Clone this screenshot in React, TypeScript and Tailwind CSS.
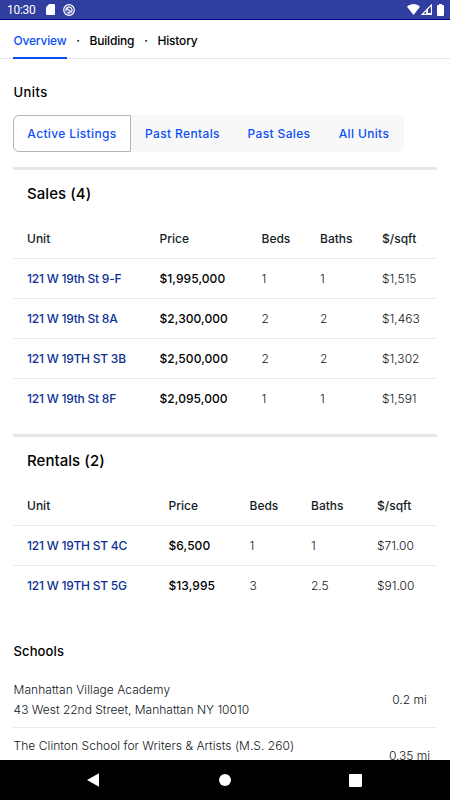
import { clsx } from "clsx";

const NAV = ["Overview", "Building", "History"];

type Listing = {
  unit: string;
  price: string;
  beds: string;
  baths: string;
  sqft: string;
};

const SALES: Listing[] = [
  { unit: "121 W 19th St 9-F", price: "$1,995,000", beds: "1", baths: "1", sqft: "$1,515" },
  { unit: "121 W 19th St 8A", price: "$2,300,000", beds: "2", baths: "2", sqft: "$1,463" },
  { unit: "121 W 19TH ST 3B", price: "$2,500,000", beds: "2", baths: "2", sqft: "$1,302" },
  { unit: "121 W 19th St 8F", price: "$2,095,000", beds: "1", baths: "1", sqft: "$1,591" },
];

const RENTALS: Listing[] = [
  { unit: "121 W 19TH ST 4C", price: "$6,500", beds: "1", baths: "1", sqft: "$71.00" },
  { unit: "121 W 19TH ST 5G", price: "$13,995", beds: "3", baths: "2.5", sqft: "$91.00" },
];

function StatusBar() {
  return (
    <div className="flex h-5 shrink-0 items-center border-b border-[#00007c] bg-[#303f9f] pr-[6px] pl-[7px] text-white">
      <span className="pt-px font-[Roboto] text-[12px] leading-none tracking-[-0.3px]">10:30</span>
      <svg className="ml-[11px] h-[11px] w-[9px]" viewBox="0 0 9 11" fill="currentColor">
        <path d="M3.2 0H8a1 1 0 0 1 1 1v9a1 1 0 0 1-1 1H1a1 1 0 0 1-1-1V3.2z" />
      </svg>
      <svg className="ml-2 size-3" viewBox="0 0 12 12" fill="none" stroke="currentColor">
        <circle cx="6" cy="6" r="5.3" strokeWidth="1.2" />
        <path d="M3.2 7.4A3 3 0 0 1 8.6 4.6a3 3 0 0 1 .1 2.8M3.6 4.2l5 4.2M4.2 8.4a3 3 0 0 0 3 .3" strokeWidth="1.3" />
      </svg>
      <div className="ml-auto flex items-center">
        <svg className="h-[11px] w-[13px]" viewBox="0 0 13 11" fill="currentColor">
          <path d="M0 2.7C3.6-.8 9.4-.8 13 2.7L6.5 11z" />
        </svg>
        <svg className="ml-px h-[11px] w-[11px]" viewBox="0 0 11 11">
          <path d="M10.4 1V10.4H1.2z" fill="none" stroke="currentColor" strokeWidth="1.1" />
          <path d="M5.2 6.2 7 4.4V9h3v1.4H5.2z" fill="currentColor" />
        </svg>
        <svg className="ml-[5px] h-3 w-[7px]" viewBox="0 0 7 12" fill="currentColor">
          <path d="M2 0h3v1h1a1 1 0 0 1 1 1v9a1 1 0 0 1-1 1H1a1 1 0 0 1-1-1V2a1 1 0 0 1 1-1h1z" />
        </svg>
      </div>
    </div>
  );
}

function ListingTable({
  title,
  rows,
  columns,
}: {
  title: string;
  rows: Listing[];
  columns: string;
}) {
  return (
    <section className="border-t-[3px] border-[#e6e6e8]">
      <h3 className="px-[14px] pt-3 text-[15px] leading-6 font-medium tracking-[0.05px]">
        {title}
      </h3>
      <div
        className={clsx(
          "mt-[13px] grid h-10 items-center border-b border-[#ebebeb] pl-[14px] text-[12px] font-medium text-[#131c26]",
          columns
        )}
      >
        <span>Unit</span>
        <span>Price</span>
        <span>Beds</span>
        <span>Baths</span>
        <span>$/sqft</span>
      </div>
      {rows.map((row) => (
        <div
          key={row.unit}
          className={clsx(
            "grid h-10 items-center border-b border-[#ebebeb] pl-[14px] text-[12px] font-light text-[#10151a] last:border-transparent",
            columns
          )}
        >
          <a className="font-medium tracking-[-0.23px] text-[#0b3293]">{row.unit}</a>
          <span className="font-medium tracking-[0.07px] text-black">{row.price}</span>
          <span>{row.beds}</span>
          <span>{row.baths}</span>
          <span>{row.sqft}</span>
        </div>
      ))}
    </section>
  );
}

export default function App() {
  return (
    <div className="flex h-[800px] w-[450px] flex-col overflow-hidden bg-white font-[Inter,sans-serif] text-black">
      <StatusBar />
      <nav className="flex h-[39px] shrink-0 border-b border-[#e8e8e8] pl-[13.4px] text-[12px] font-medium tracking-[-0.17px]">
        {NAV.map((item, i) => (
          <div key={item} className="flex">
            {i > 0 && <span className="w-[23px] pt-3 text-center">·</span>}
            <a
              className={clsx(
                "h-[39px] border-b-2 pt-3",
                i === 0 ? "border-[#0d4ff5] text-[#0d4ff5]" : "border-transparent"
              )}
            >
              {item}
            </a>
          </div>
        ))}
      </nav>

      <main className="min-h-0 flex-1 overflow-hidden px-[13px]">
        <h2 className="pt-[23px] pl-[0.6px] text-[13px] leading-5 font-medium tracking-[0.4px]">
          Units
        </h2>
        <div className="mt-[13px] flex h-[37px] w-[391px] items-stretch rounded-md bg-[#f8f8f8] text-[12px] font-medium tracking-[0.36px] text-[#0d4ff5]">
          <button className="w-[118px] rounded-l-md border border-[#b5b5b5] bg-white">
            Active Listings
          </button>
          <button className="w-[103px]">Past Rentals</button>
          <button className="w-[90px]">Past Sales</button>
          <button className="w-[80px]">All Units</button>
        </div>

        <div className="mt-[15px] flex flex-col gap-[15px]">
          <ListingTable
            title="Sales (4)"
            rows={SALES}
            columns="grid-cols-[132.5px_102px_58.5px_62px_1fr]"
          />
          <ListingTable
            title="Rentals (2)"
            rows={RENTALS}
            columns="grid-cols-[141.5px_81px_61.5px_66px_1fr]"
          />
        </div>

        <h2 className="mt-[35px] pl-[0.6px] text-[13px] leading-5 font-medium tracking-[0.1px]">
          Schools
        </h2>
        <div className="mt-[19px] text-[12px] leading-5 font-light text-[#10151a]">
          <div className="flex items-center border-b border-[#ebebeb] pb-[7px]">
            <div className="flex-1 pl-[0.6px]">
              <p className="tracking-[0.05px]">Manhattan Village Academy</p>
              <p>43 West 22nd Street, Manhattan NY 10010</p>
            </div>
            <span className="w-[55px] text-center">0.2 mi</span>
          </div>
          <div className="flex h-12 items-center pt-[7px]">
            <p className="h-10 flex-1 pl-[0.6px] tracking-[0.04px]">
              The Clinton School for Writers &amp; Artists (M.S. 260)
            </p>
            <span className="w-[55px] text-center">0.35 mi</span>
          </div>
        </div>
      </main>

      <footer className="flex h-10 shrink-0 items-center bg-black pl-[87px] text-white">
        <svg className="h-[14px] w-3" viewBox="0 0 12 14" fill="currentColor">
          <path d="M12 .3v13.4L0 7z" />
        </svg>
        <span className="ml-[120px] size-3 rounded-full bg-white" />
        <span className="ml-[118px] size-[13px] rounded-[1px] bg-white" />
      </footer>
    </div>
  );
}
